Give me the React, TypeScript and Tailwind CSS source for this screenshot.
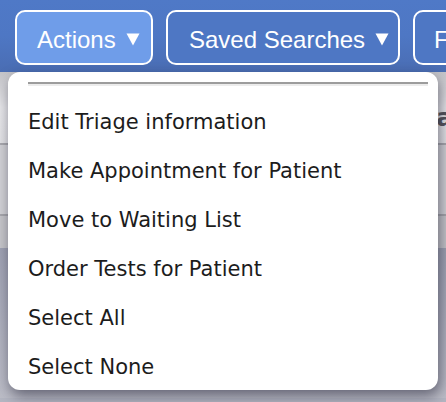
import React from 'react';

const items = [
  'Edit Triage information',
  'Make Appointment for Patient',
  'Move to Waiting List',
  'Order Tests for Patient',
  'Select All',
  'Select None',
];

function Caret() {
  return (
    <svg width="14" height="13" viewBox="0 0 14 13" className="ml-[10px] shrink-0">
      <path d="M0.5 0.5 L13.5 0.5 L7 12.5 Z" fill="white" />
    </svg>
  );
}

export default function App() {
  return (
    <div className="relative w-[446px] h-[402px] overflow-hidden bg-[#b4b6c2] font-['Liberation_Sans',Arial,sans-serif]">
      {/* Toolbar */}
      <div className="h-[72px] bg-gradient-to-b from-[#4f79c7] via-[#4e77c4] to-[#4a6db3] flex items-start gap-[13px] pl-[15px] pt-[10px]">
        <button className="h-[55px] w-[138px] shrink-0 flex items-center pl-[20px] pt-[4px] rounded-[10px] border-2 border-white bg-[#6f9de9] text-white text-[24px] leading-none">
          Actions
          <Caret />
        </button>
        <button className="h-[55px] w-[234px] shrink-0 flex items-center pl-[21px] pt-[4px] rounded-[10px] border-2 border-white bg-[#4e77c4] text-white text-[24px] leading-none">
          Saved Searches
          <Caret />
        </button>
        <button className="h-[55px] w-[80px] shrink-0 flex items-center pl-[19px] pt-[4px] rounded-[10px] border-2 border-white bg-[#4e77c4] text-white text-[24px] leading-none">
          F
        </button>
      </div>

      {/* Page behind the menu */}
      <div className="flex flex-col">
        <div className="h-[73px] bg-gradient-to-b from-[#c4c4c8] via-[#e7e7ea] to-[#e3e3e6] border-b-2 border-[#a9a9ae] flex items-center justify-end pt-[20px]">
          <span className="text-[25px] font-bold text-[#55555c] mr-[-7px] font-['DejaVu_Sans',sans-serif]">a</span>
        </div>
        <div className="h-[71px] bg-[#d2d2d6] border-b-2 border-[#a7a7ac]" />
        <div className="h-[32px] bg-[#c6c6ca]" />
        <div className="h-[150px] bg-gradient-to-b from-[#9fa2b3] to-[#bcbdc7]" />
      </div>

      {/* Dropdown menu */}
      <div className="absolute left-[8px] top-[72px] w-[430px] h-[318px] bg-white rounded-[12px] shadow-[2px_6px_14px_rgba(30,30,50,0.55)] pl-[20px] pr-[10px] pt-[10px]">
        <div className="h-[2px] bg-[#9c9c9c]" />
        <div className="h-[2px] bg-[#ececec] mb-[12px]" />
        <ul className="flex flex-col font-['DejaVu_Sans',Verdana,sans-serif] text-[#1c1c1c] text-[21px]">
          {items.map((item) => (
            <li key={item} className="h-[49px] flex items-center">
              {item}
            </li>
          ))}
        </ul>
      </div>
    </div>
  );
}
